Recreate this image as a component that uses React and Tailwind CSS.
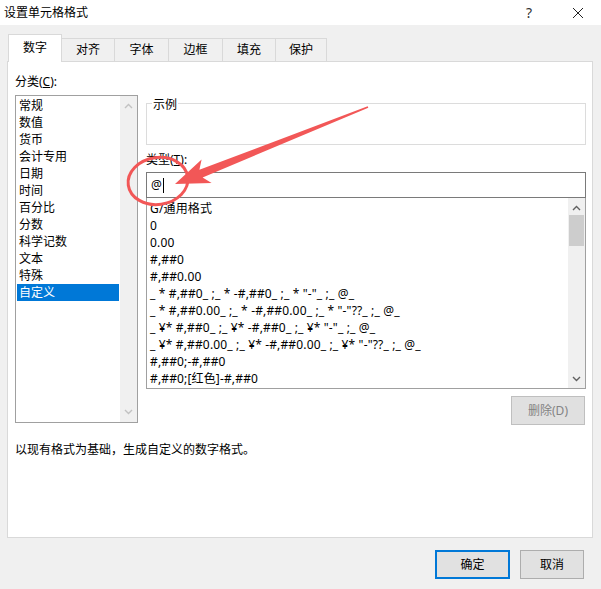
import React from "react";

const cats = ["常规", "数值", "货币", "会计专用", "日期", "时间", "百分比", "分数", "科学记数", "文本", "特殊", "自定义"];
const formats = [
  "G/通用格式",
  "0",
  "0.00",
  "#,##0",
  "#,##0.00",
  '_ * #,##0_ ;_ * -#,##0_ ;_ * "-"_ ;_ @_',
  '_ * #,##0.00_ ;_ * -#,##0.00_ ;_ * "-"??_ ;_ @_',
  '_ ¥* #,##0_ ;_ ¥* -#,##0_ ;_ ¥* "-"_ ;_ @_',
  '_ ¥* #,##0.00_ ;_ ¥* -#,##0.00_ ;_ ¥* "-"??_ ;_ @_',
  "#,##0;-#,##0",
  "#,##0;[红色]-#,##0",
];
const tabs = [
  ["对齐", "w-[53px]"],
  ["字体", "w-[54px]"],
  ["边框", "w-[54px]"],
  ["填充", "w-[53px]"],
  ["保护", "w-[51px]"],
];

function Chevron({ up, color }) {
  return (
    <svg width="9" height="6" viewBox="0 0 9 6">
      <polyline
        points={up ? "1,5 4.5,1.5 8,5" : "1,1 4.5,4.5 8,1"}
        fill="none"
        stroke={color}
        strokeWidth="1.4"
      />
    </svg>
  );
}

export default function App() {
  return (
    <div className="relative h-[589px] w-[601px] overflow-hidden bg-[#f0f0f0] font-['Noto_Sans','Noto_Sans_CJK_SC',sans-serif] text-[12px] leading-[16px] text-black">
      {/* title bar */}
      <div className="flex h-[25px] items-center bg-white">
        <span className="pl-[4px]">设置单元格格式</span>
        <span className="ml-auto mr-[40px] text-[14px] text-[#333]">?</span>
        <svg width="12" height="12" viewBox="0 0 12 12" className="mr-[17px]">
          <path d="M1 1L11 11M11 1L1 11" stroke="#222" strokeWidth="1" />
        </svg>
      </div>

      {/* tabs */}
      <div className="flex h-[36px] items-end pl-[8px]">
        <div className="relative z-10 -mb-px flex h-[28px] w-[54px] items-center justify-center border-x border-t border-[#d9d9d9] bg-white pb-[2px]">
          数字
        </div>
        {tabs.map(([t, w]) => (
          <div key={t} className={`flex h-[23px] items-center justify-center border-r border-t border-[#d9d9d9] ${w}`}>
            {t}
          </div>
        ))}
      </div>

      {/* panel */}
      <div className="ml-[7px] flex h-[477px] w-[586px] flex-col border border-[#d9d9d9] bg-white">
        <div className="flex">
          <div className="ml-[7px] flex w-[123px] flex-col pt-[12px]">
            <div>
              分类(<span className="underline">C</span>):
            </div>
            <div className="mt-[5px] flex h-[328px] border border-[#a0a0a0]">
              <div className="flex flex-1 flex-col pl-[1px] pt-[1px]">
                {cats.map((c, i) => (
                  <div
                    key={c}
                    className={`flex h-[17px] items-center pl-[2px] ${i === cats.length - 1 ? "mr-px bg-[#0078d7] text-white" : ""}`}
                  >
                    {c}
                  </div>
                ))}
              </div>
              <div className="flex w-[17px] flex-col items-center justify-between bg-[#f0f0f0] py-[7px]">
                <Chevron up color="#c2c2c2" />
                <Chevron color="#c2c2c2" />
              </div>
            </div>
          </div>

          <div className="ml-[8px] flex w-[440px] flex-col pt-[41px]">
            <div className="relative h-[42px] border border-[#dcdcdc]">
              <span className="absolute -top-[7px] left-[5px] bg-white px-px">示例</span>
            </div>
            <div className="mt-[7px]">
              类型(<span className="underline">T</span>):
            </div>
            <div className="mt-[4px] flex h-[26px] items-center border border-[#7a7a7a] pl-[4px]">
              <span>@</span>
              <span className="ml-[1px] h-[15px] w-px bg-black" />
            </div>
            <div className="flex h-[191px] border border-t-0 border-[#a0a0a0]">
              <div className="flex flex-1 flex-col overflow-hidden pl-[3px] pt-[2px] tracking-[0.15px]">
                {formats.map((f) => (
                  <div key={f} className="flex h-[17px] shrink-0 items-center whitespace-pre">
                    {f}
                  </div>
                ))}
              </div>
              <div className="flex w-[17px] flex-col items-center bg-[#f0f0f0] pt-[7px] pb-[6px]">
                <Chevron up color="#606060" />
                <div className="mt-[4px] h-[31px] w-[15px] bg-[#cdcdcd]" />
                <div className="mt-auto">
                  <Chevron color="#606060" />
                </div>
              </div>
            </div>
            <div className="mt-[7px] flex justify-end pr-[1px]">
              <div className="flex h-[29px] w-[74px] items-center justify-center border border-[#bfbfbf] bg-[#e0e0e0] text-[#838383]">
                删除(D)
              </div>
            </div>
          </div>
        </div>
        <div className="ml-[7px] mt-[17px]">以现有格式为基础，生成自定义的数字格式。</div>
      </div>

      {/* footer buttons */}
      <div className="mt-[12px] flex justify-end gap-[10px] pr-[17px]">
        <div className="flex h-[29px] w-[75px] items-center justify-center border-2 border-[#0078d7] bg-[#e1e1e1]">
          确定
        </div>
        <div className="flex h-[29px] w-[64px] items-center justify-center border border-[#adadad] bg-[#e1e1e1]">
          取消
        </div>
      </div>

      {/* red annotation */}
      <svg className="pointer-events-none absolute left-0 top-0" width="601" height="589" viewBox="0 0 601 589">
        <ellipse cx="158" cy="181" rx="30" ry="23.5" fill="none" stroke="#f25757" strokeWidth="3" transform="rotate(-8 158 181)" />
        <polygon
          points="367.7,106.3 199.4,169.8 201.6,159.6 175,184 211.6,183 202.6,177.4 368.3,107.7"
          fill="#f25757"
        />
      </svg>
    </div>
  );
}
